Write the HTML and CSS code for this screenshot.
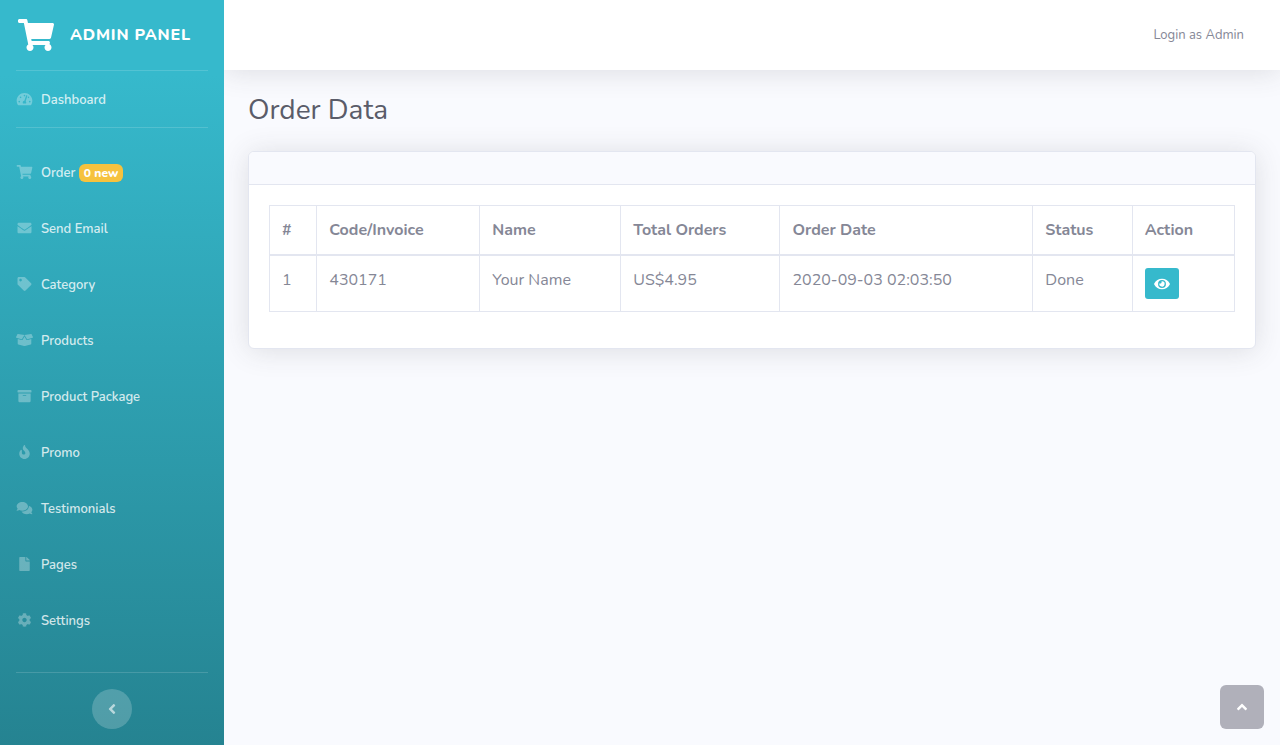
FILE: index.html
```html
<!DOCTYPE html>
<html lang="en">
<head>
<meta charset="utf-8">
<meta name="viewport" content="width=device-width, initial-scale=1">
<title>Order Data - Admin Panel</title>
<link rel="stylesheet" href="styles.css">
</head>
<body>
<div class="wrapper">
  <nav class="sidebar" aria-label="Main">
    <a class="brand" href="#">
      <svg class="brand-icon" viewBox="0 0 576 512" aria-hidden="true"><path id="cart" d="M528.12 301.319l47.273-208C578.806 78.301 567.391 64 551.99 64H159.208l-9.166-44.81C147.758 8.021 137.93 0 126.529 0H24C10.745 0 0 10.745 0 24v16c0 13.255 10.745 24 24 24h69.883l70.248 343.435C147.325 417.1 136 435.222 136 456c0 30.928 25.072 56 56 56s56-25.072 56-56c0-15.674-6.447-29.835-16.824-40h209.647C430.447 426.165 424 440.326 424 456c0 30.928 25.072 56 56 56s56-25.072 56-56c0-22.172-12.888-41.332-31.579-50.405l5.517-24.276c3.413-15.018-8.002-29.319-23.403-29.319H218.117l-6.545-32h293.145c11.206 0 20.92-7.754 23.403-18.681z"/></svg>
      <span>ADMIN PANEL</span>
    </a>
    <hr class="divider">
    <a class="nav-link" href="#"><svg class="nav-icon" viewBox="0 0 576 512" aria-hidden="true"><path d="M288 32C128.94 32 0 160.94 0 320c0 52.8 14.25 102.26 39.06 144.8 5.61 9.62 16.3 15.2 27.44 15.2h443c11.14 0 21.83-5.58 27.44-15.2C561.75 422.26 576 372.8 576 320c0-159.06-128.94-288-288-288zm0 64c14.71 0 26.58 10.13 30.32 23.65-1.11 2.26-2.64 4.23-3.45 6.67l-9.22 27.67c-5.13 3.49-10.97 6.01-17.64 6.01-17.67 0-32-14.33-32-32S270.33 96 288 96zM96 384c-17.67 0-32-14.33-32-32s14.33-32 32-32 32 14.33 32 32-14.33 32-32 32zm48-160c-17.67 0-32-14.33-32-32s14.33-32 32-32 32 14.33 32 32-14.33 32-32 32zm246.77-72.41l-61.33 184C343.13 347.33 352 364.54 352 384c0 11.72-3.38 22.55-8.88 32H232.88c-5.5-9.45-8.88-20.28-8.88-32 0-33.94 26.5-61.43 59.9-63.59l61.34-184.01c4.17-12.56 17.73-19.45 30.36-15.17 12.57 4.19 19.35 17.79 15.17 30.36zm14.66 57.2l15.52-46.55c3.47-1.29 7.13-2.23 11.05-2.23 17.67 0 32 14.33 32 32s-14.33 32-32 32c-11.38-.01-20.89-6.28-26.57-15.22zM480 384c-17.67 0-32-14.33-32-32s14.33-32 32-32 32 14.33 32 32-14.33 32-32 32z"/></svg><span class="nav-label">Dashboard</span></a>
    <hr class="divider">
    <div class="nav-list">
      <a class="nav-link" href="#"><svg class="nav-icon" viewBox="0 0 576 512" aria-hidden="true"><use href="#cart"/></svg><span class="nav-label">Order <span class="badge">0 new</span></span></a>
      <a class="nav-link" href="#"><svg class="nav-icon" viewBox="0 0 512 512" aria-hidden="true"><path d="M502.3 190.8c3.9-3.1 9.7-.2 9.7 4.7V400c0 26.5-21.5 48-48 48H48c-26.5 0-48-21.5-48-48V195.6c0-5 5.7-7.8 9.7-4.7 22.4 17.4 52.1 39.5 154.1 113.6 21.1 15.4 56.7 47.8 92.2 47.6 35.7.3 72-32.8 92.3-47.6 102-74.1 131.6-96.3 154-113.7zM256 320c23.2.4 56.6-29.2 73.4-41.4 132.7-96.3 142.8-104.7 173.4-128.7 5.8-4.5 9.2-11.5 9.2-18.9v-19c0-26.5-21.5-48-48-48H48c-26.5 0-48 21.5-48 48v19c0 7.4 3.4 14.3 9.2 18.9 30.6 23.9 40.7 32.4 173.4 128.7 16.8 12.2 50.2 41.8 73.4 41.4z"/></svg><span class="nav-label">Send Email</span></a>
      <a class="nav-link" href="#"><svg class="nav-icon" viewBox="0 0 512 512" aria-hidden="true"><path d="M0 252.118V48C0 21.49 21.49 0 48 0h204.118a48 48 0 0 1 33.941 14.059l211.882 211.882c18.745 18.745 18.745 49.137 0 67.882L293.823 497.941c-18.745 18.745-49.137 18.745-67.882 0L14.059 286.059A48 48 0 0 1 0 252.118zM112 64c-26.51 0-48 21.49-48 48s21.49 48 48 48 48-21.49 48-48-21.49-48-48-48z"/></svg><span class="nav-label">Category</span></a>
      <a class="nav-link" href="#"><svg class="nav-icon" viewBox="0 0 640 512" aria-hidden="true"><path d="M425.7 256c-16.9 0-32.8-9-41.4-23.4L320 126l-64.2 106.6c-8.7 14.5-24.6 23.5-41.5 23.5-4.5 0-9-.6-13.3-1.9L64 215v178c0 14.7 10 27.5 24.2 31l216.2 54.1c10.2 2.5 20.9 2.5 31 0L551.8 424c14.2-3.6 24.2-16.4 24.2-31V215l-137 39.1c-4.3 1.3-8.8 1.9-13.3 1.9zm212.6-112.2L586.8 41c-3.1-6.2-9.8-9.8-16.7-8.9L320 64l91.7 152.1c3.8 6.3 11.4 9.3 18.5 7.3l197.9-56.5c9.9-2.9 14.7-13.9 10.2-23.1zM53.2 41L1.7 143.8c-4.6 9.2.3 20.2 10.1 23l197.9 56.5c7.1 2 14.7-1 18.5-7.3L320 64 69.8 32.1c-6.9-.8-13.5 2.7-16.6 8.9z"/></svg><span class="nav-label">Products</span></a>
      <a class="nav-link" href="#"><svg class="nav-icon" viewBox="0 0 512 512" aria-hidden="true"><path d="M32 448c0 17.7 14.3 32 32 32h384c17.7 0 32-14.3 32-32V160H32v288zm160-212c0-6.6 5.4-12 12-12h104c6.6 0 12 5.4 12 12v8c0 6.6-5.4 12-12 12H204c-6.6 0-12-5.4-12-12v-8zM480 32H32C14.3 32 0 46.3 0 64v48c0 8.8 7.2 16 16 16h480c8.8 0 16-7.2 16-16V64c0-17.7-14.3-32-32-32z"/></svg><span class="nav-label">Product Package</span></a>
      <a class="nav-link" href="#"><svg class="nav-icon" viewBox="0 0 384 512" aria-hidden="true"><path d="M216 23.86c0-23.8-30.65-32.77-44.15-13.04C48 191.85 224 200 224 288c0 35.63-29.11 64.46-64.85 63.99-35.17-.45-63.15-29.77-63.15-64.94v-85.51c0-21.7-26.47-32.23-41.43-16.5C27.8 213.16 0 261.33 0 320c0 105.87 86.13 192 192 192s192-86.13 192-192c0-170.29-168-193.17-168-296.14z"/></svg><span class="nav-label">Promo</span></a>
      <a class="nav-link" href="#"><svg class="nav-icon" viewBox="0 0 576 512" aria-hidden="true"><path d="M416 192c0-88.4-93.1-160-208-160S0 103.6 0 192c0 34.3 14.1 65.9 38 92-13.4 30.2-35.5 54.2-35.8 54.5-2.2 2.3-2.8 5.7-1.5 8.7S4.8 352 8 352c36.6 0 66.9-12.3 88.7-25 32.2 15.7 70.3 25 111.3 25 114.9 0 208-71.6 208-160zm122 220c23.9-26 38-57.7 38-92 0-66.9-53.5-124.2-129.3-148.1.9 6.6 1.3 13.3 1.3 20.1 0 105.9-107.7 192-240 192-10.8 0-21.3-.8-31.7-1.9C207.8 439.6 281.8 480 368 480c41 0 79.1-9.2 111.3-25 21.8 12.7 52.1 25 88.7 25 3.2 0 6.1-1.9 7.3-4.8 1.3-2.9.7-6.3-1.5-8.7-.3-.3-22.4-24.2-35.8-54.5z"/></svg><span class="nav-label">Testimonials</span></a>
      <a class="nav-link" href="#"><svg class="nav-icon" viewBox="0 0 384 512" aria-hidden="true"><path d="M224 136V0H24C10.7 0 0 10.7 0 24v464c0 13.3 10.7 24 24 24h336c13.3 0 24-10.7 24-24V160H248c-13.2 0-24-10.8-24-24zm160-14.1v6.1H256V0h6.1c6.4 0 12.5 2.5 17 7l97.9 98c4.5 4.5 7 10.6 7 16.9z"/></svg><span class="nav-label">Pages</span></a>
      <a class="nav-link" href="#"><svg class="nav-icon" viewBox="0 0 512 512" aria-hidden="true"><path d="M487.4 315.7l-42.6-24.6c4.3-23.2 4.3-47 0-70.2l42.6-24.6c4.9-2.8 7.1-8.6 5.5-14-11.1-35.6-30-67.8-54.7-94.6-3.8-4.1-10-5.1-14.8-2.3L380.8 110c-17.9-15.4-38.5-27.3-60.8-35.1V25.8c0-5.6-3.9-10.5-9.4-11.7-36.7-8.2-74.3-7.8-109.2 0-5.5 1.2-9.4 6.1-9.4 11.7V75c-22.2 7.9-42.8 19.8-60.8 35.1L88.7 85.5c-4.9-2.8-11-1.9-14.8 2.3-24.7 26.7-43.6 58.9-54.7 94.6-1.7 5.4.6 11.2 5.5 14L67.3 221c-4.3 23.2-4.3 47 0 70.2l-42.6 24.6c-4.9 2.8-7.1 8.6-5.5 14 11.1 35.6 30 67.8 54.7 94.6 3.8 4.1 10 5.1 14.8 2.3l42.6-24.6c17.9 15.4 38.5 27.3 60.8 35.1v49.2c0 5.6 3.9 10.5 9.4 11.7 36.7 8.2 74.3 7.8 109.2 0 5.5-1.2 9.4-6.1 9.4-11.7v-49.2c22.2-7.9 42.8-19.8 60.8-35.1l42.6 24.6c4.9 2.8 11 1.9 14.8-2.3 24.7-26.7 43.6-58.9 54.7-94.6 1.5-5.5-.7-11.3-5.6-14.1zM256 336c-44.1 0-80-35.9-80-80s35.9-80 80-80 80 35.9 80 80-35.9 80-80 80z"/></svg><span class="nav-label">Settings</span></a>
    </div>
    <hr class="divider">
    <button class="sidebar-toggle" type="button" aria-label="Collapse sidebar"><svg class="toggle-icon" viewBox="0 0 256 512" aria-hidden="true"><path d="M31.7 239l136-136c9.4-9.4 24.6-9.4 33.9 0l22.6 22.6c9.4 9.4 9.4 24.6 0 33.9L127.9 256l96.4 96.4c9.4 9.4 9.4 24.6 0 33.9L201.7 409c-9.4 9.4-24.6 9.4-33.9 0l-136-136c-9.5-9.4-9.5-24.6-.1-34z"/></svg></button>
  </nav>

  <div class="content">
    <header class="topbar"><a class="user-link" href="#">Login as Admin</a></header>
    <main class="page">
      <h1 class="page-title">Order Data</h1>
      <section class="card">
        <div class="card-header"></div>
        <div class="card-body">
          <table class="table">
            <colgroup>
              <col class="col-index"><col class="col-code"><col class="col-name"><col class="col-total"><col class="col-date"><col class="col-status"><col class="col-action">
            </colgroup>
            <thead>
              <tr><th>#</th><th>Code/Invoice</th><th>Name</th><th>Total Orders</th><th>Order Date</th><th>Status</th><th>Action</th></tr>
            </thead>
            <tbody>
              <tr>
                <td>1</td><td>430171</td><td>Your Name</td><td>US$4.95</td><td>2020-09-03 02:03:50</td><td>Done</td>
                <td><button class="view-button" type="button" aria-label="View order"><svg class="view-icon" viewBox="0 0 576 512" aria-hidden="true"><path d="M572.52 241.4C518.29 135.59 410.93 64 288 64S57.68 135.64 3.48 241.41a32.35 32.35 0 0 0 0 29.19C57.71 376.41 165.07 448 288 448s230.32-71.64 284.52-177.41a32.35 32.35 0 0 0 0-29.19zM288 400a144 144 0 1 1 144-144 143.93 143.93 0 0 1-144 144zm0-240a95.31 95.31 0 0 0-25.31 3.79 47.85 47.85 0 0 1-66.9 66.9A95.78 95.78 0 1 0 288 160z"/></svg></button></td>
              </tr>
            </tbody>
          </table>
        </div>
      </section>
    </main>
  </div>
</div>
<a class="scroll-top" href="#" aria-label="Back to top"><svg class="scroll-icon" viewBox="0 0 320 512" aria-hidden="true"><path d="M177 159.7l136 136c9.4 9.4 9.4 24.6 0 33.9l-22.6 22.6c-9.4 9.4-24.6 9.4-33.9 0L160 255.9l-96.4 96.4c-9.4 9.4-24.6 9.4-33.9 0L7 329.7c-9.4-9.4-9.4-24.6 0-33.9l136-136c9.4-9.5 24.6-9.5 34-.1z"/></svg></a>
</body>
</html>
```
FILE: styles.css
```css
*, *::before, *::after { box-sizing: border-box; }

body {
  margin: 0;
  background: #f9fafe;
  color: #858796;
  font-family: Nunito, "Open Sans", "Noto Sans", sans-serif;
  font-size: 16px;
  line-height: 24px;
}

a { color: inherit; text-decoration: none; }
svg { display: block; fill: currentColor; }
button { border: 0; padding: 0; font: inherit; cursor: pointer; }

.wrapper { display: flex; min-height: 100vh; }

.sidebar {
  z-index: 1;
  display: flex;
  flex-direction: column;
  flex: none;
  width: 224px;
  background: linear-gradient(180deg, #36b9cc 10%, #258391 100%);
  color: #fff;
}

.brand {
  display: flex;
  align-items: center;
  gap: 16px;
  height: 70px;
  padding: 0 18px;
  font-weight: 800;
  letter-spacing: 0.05em;
  white-space: nowrap;
}
.brand-icon { width: 36px; height: 32px; flex: none; }

.divider {
  width: auto;
  margin: 0 16px;
  border: 0;
  border-top: 1px solid rgba(255, 255, 255, .15);
}

.nav-list { padding: 16px 0 24px; }
.nav-link {
  display: flex;
  align-items: center;
  height: 56px;
  padding: 0 16px;
  gap: 8px;
  font-size: 13px;
  font-weight: 600;
  color: rgba(255, 255, 255, .8);
}
.nav-label { padding-top: 2px; }
.nav-icon {
  width: 17px;
  height: 14px;
  color: rgba(255, 255, 255, .3);
}
.badge {
  display: inline-block;
  padding: 0 5px;
  border-radius: 6px;
  background: #f6c23e;
  color: #fff;
  font-size: 12px;
  font-weight: 800;
  line-height: 18px;
}

.sidebar-toggle {
  display: grid;
  place-items: center;
  align-self: center;
  width: 40px;
  height: 40px;
  margin: 16px 0;
  border-radius: 50%;
  background: rgba(255, 255, 255, .2);
  color: rgba(255, 255, 255, .6);
}
.toggle-icon { width: 8px; height: 16px; }

.content { flex: 1; min-width: 0; }

.topbar {
  display: flex;
  align-items: center;
  justify-content: flex-end;
  height: 70px;
  padding: 0 36px;
  background: #fff;
  box-shadow: 0 2px 28px rgba(58, 59, 69, .15);
}
.user-link { font-size: 13px; }

.page { padding: 24px; }
.page-title {
  margin: 0 0 24px;
  color: #5a5c69;
  font-size: 28px;
  font-weight: 400;
  line-height: 33px;
}

.card {
  border: 1px solid #e3e6f0;
  border-radius: 6px;
  background: #fff;
  box-shadow: 0 2px 28px rgba(58, 59, 69, .15);
}
.card-header {
  height: 33px;
  border-bottom: 1px solid #e3e6f0;
  border-radius: 5px 5px 0 0;
  background: #f9fafe;
}
.card-body { padding: 20px 20px 36px; }

.table {
  width: 100%;
  table-layout: fixed;
  border-collapse: collapse;
}
.table th, .table td {
  padding: 12px;
  border: 1px solid #e3e6f0;
  text-align: left;
  vertical-align: top;
}
.table th { border-bottom-width: 2px; font-weight: 700; white-space: nowrap; }
.col-index { width: 4.9%; }
.col-code { width: 16.9%; }
.col-name { width: 14.6%; }
.col-total { width: 16.5%; }
.col-date { width: 26.2%; }
.col-status { width: 10.3%; }
.col-action { width: 10.6%; }

.view-button {
  display: grid;
  place-items: center;
  width: 34px;
  height: 31px;
  border-radius: 3px;
  background: #36b9cc;
  color: #fff;
}
.view-icon { width: 16px; height: 14px; }

.scroll-top {
  position: fixed;
  right: 16px;
  bottom: 16px;
  display: grid;
  place-items: center;
  width: 44px;
  height: 44px;
  border-radius: 6px;
  background: #b0b0ba;
  color: #fff;
}
.scroll-icon { width: 10px; height: 16px; }
```
